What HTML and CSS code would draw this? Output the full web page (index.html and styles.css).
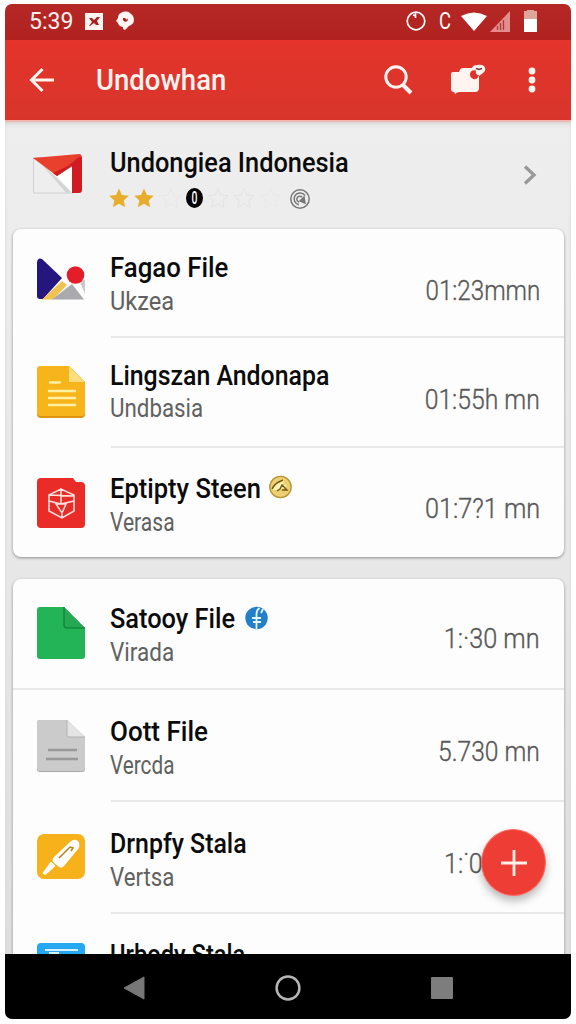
FILE: index.html
```html
<!DOCTYPE html>
<html lang="id">
<head>
<meta charset="utf-8">
<title>Undowhan</title>
<link rel="stylesheet" href="styles.css">
</head>
<body>
<div class="phone">
  <div class="status">
    <span class="clock">5:39</span>
    <svg class="st-img" width="18" height="17" viewBox="0 0 18 17"><rect width="18" height="17" fill="#fff4f2"/><path d="M4 5h3l2 2 3-3h3l-3 4 2 4h-3l-2-2-4 3H4l3-4z" fill="#a5201f"/></svg>
    <svg class="st-chat" width="18" height="20" viewBox="0 0 18 20"><path d="M9 .5C13 0 14 2 15 3c2 1 3 4 3 6 0 3-2 5-5 6l-4 4-2-1v-2C4 16 2 13 2 12L0 10l2-3C2 3 5 1 9 .5z" fill="#fff4f2"/><path d="M7 7c-1 5 6 5 5 0l-1 2-2-2z" fill="#a5201f"/></svg>
    <span class="grow"></span>
    <svg class="alarm" width="20" height="20" viewBox="0 0 20 20" fill="none" stroke="#fff" stroke-width="1.700"><circle cx="10" cy="10" r="8.800"/><path d="M9.500 2v5M7 4l3 1"/></svg>
    <span class="cee">C</span>
    <svg class="wifi" width="26" height="19" viewBox="0 0 26 19"><path d="M0 4Q13-3 26 4L13 19z" fill="#fff"/></svg>
    <svg class="signal" width="20" height="21" viewBox="0 0 20 21"><path d="M20 0v21H0z" fill="#e58d8c"/><path d="M7.500 15v4M10.500 12v7M13.500 9v10" stroke="#a63a38" stroke-width="1.300"/></svg>
    <svg class="battery" width="13" height="22" viewBox="0 0 13 22"><path d="M0 1h3V0h7v1h3v9H0z" fill="#dca69b"/><path d="M0 9h13v13H0z" fill="#fff"/></svg>
  </div>
  <div class="appbar">
    <svg class="back" width="26" height="26" viewBox="0 0 26 26" fill="none" stroke="#fff4f0" stroke-width="3"><path d="M25 13H3M13.500 2L2.500 13l11 11"/></svg>
    <h1 class="heading">Undowhan</h1>
    <svg class="search" width="29" height="30" viewBox="0 0 29 30" fill="none" stroke="#fff4f0"><circle cx="12" cy="12" r="10.200" stroke-width="3"/><path d="M19 20l8 8" stroke-width="4"/></svg>
    <svg class="camera" width="36" height="31" viewBox="0 0 36 31"><path d="M2.500 8H9q1-4 4-4h9q1-3 5-3 4-1 7 1 3 4-1 7l-4 3v12q0 4-4 4H10q-3 0-5 2l-1-2q-3 0-3-3V11q0-3 1.500-3z" fill="#fff4f0"/><path d="M29 11.500l-2 3q-3 2-6-1-2-3 0-6 2-2 5-1-1 4 3 5z" fill="#df332b"/><path d="M26 4.500l3 1 3-1" stroke="#6e3730" stroke-width="1.500" fill="none"/></svg>
    <svg class="more" width="8" height="26" viewBox="0 0 8 26" fill="#fff4f0"><circle cx="4" cy="4" r="3.400"/><circle cx="4" cy="13" r="3.400"/><circle cx="4" cy="22" r="3.400"/></svg>
  </div>
  <div class="body">
    <div class="summary">
      <svg class="mail" width="50" height="40" viewBox="0 0 50 40"><path d="M.5 3.500h40V39H.5z" fill="#eee" stroke="#d0d0d0"/><path d="M12 13l27 25.500h-6L9 11z" fill="#d4d4d3"/><path d="M24 22l15-9v26z" fill="#fff"/><path d="M0 4L46 0q3 0 3 4L39 12l-15 10z" fill="#e8402d"/><path d="M49 3v33q0 3-3 3h-7V12L24 22l-4-3 15-7 11-9z" fill="#cf1c22"/></svg>
      <div class="summary-text">
        <div class="title t-main">Undongiea Indonesia</div>
        <div class="rating">
          <svg width="180" height="22" viewBox="0 0 180 22"><defs><path id="s" d="M10 .5l2.900 6.600 6.900.7-5.100 4.600 1.400 6.900-6.100-3.500-6.100 3.500 1.400-6.900L.2 7.800l6.900-.7z"/></defs><g fill="#e8ad2c"><use href="#s"/><use href="#s" x="25"/></g><g fill="none" stroke="#e2e2e2"><use href="#s" x="52" opacity=".4"/><use href="#s" x="99"/><use href="#s" x="125"/><use href="#s" x="152" opacity=".3"/></g></svg>
          <span class="zero"><span class="zero-digit">0</span></span>
          <svg class="seal" width="20" height="20" viewBox="0 0 20 20" fill="none" stroke="#777" stroke-width="1.500"><circle cx="10" cy="10" r="9.200"/><path d="M15 6.500a6 6 0 1 0-6 9.300M12 8a3 3 0 1 0-3 5"/><path d="M14 8l1 6-5-2z" fill="#777"/></svg>
        </div>
      </div>
      <svg class="chevron" width="14" height="20" viewBox="0 0 14 20" fill="none" stroke="#999" stroke-width="3.300"><path d="M2 1.500L11 10l-9 8.500"/></svg>
    </div>

    <div class="card">
      <div class="row r1">
        <svg class="icon" width="50" height="52" viewBox="0 0 50 52"><path d="M42 24h6v14z" fill="#c9c9d0"/><path d="M0 6q1-5 5-3l20 19L6 43H3q-3 0-3-3z" fill="#24157f"/><path d="M5 43.500l20-18.500 5 4-14 14.500z" fill="#f0c252"/><path d="M15 43.500l20-15.500 12 15.500z" fill="#aaa9ae"/><circle cx="38.500" cy="19" r="8.800" fill="#e31e28"/></svg>
        <div class="text"><div class="title t1">Fagao File</div><div class="sub s1">Ukzea</div></div><div class="time m1">01:23mmn</div>
      </div>
      <div class="row r2">
        <svg class="icon" width="50" height="54" viewBox="0 0 50 54"><path d="M4 1h28l16 16v32q0 4-4 4H4q-4 0-4-4V5q0-4 4-4z" fill="#dc9411"/><path d="M4 1h28l16 16v30q0 4-4 4H4q-4 0-4-4V5q0-4 4-4z" fill="#f8b51b"/><path d="M32 1l16 16H32z" fill="#fcdd7b"/><path d="M13 17.500h10M12 26h26M12 33h26M12 40h26" stroke="#fff0a2" stroke-width="2.500" stroke-linecap="round"/></svg>
        <div class="text"><div class="title t2">Lingszan Andonapa</div><div class="sub s2">Undbasia</div></div><div class="time m2">01:55h mn</div>
      </div>
      <div class="row r3">
        <svg class="icon" width="50" height="52" viewBox="0 0 50 52"><path d="M4 1h32l3 4h5q4 0 4 4v38q0 4-4 4H4q-4 0-4-4V5q0-4 4-4z" fill="#e92c27"/><path d="M12 18l12-6 13 6v16l-12 7-13-7zM12 24l12 3 13-3M24 11v16M12 18l25 1M19 27h10l-4 9zM25 34v6" fill="none" stroke="#ffe3df" stroke-width="1.500"/></svg>
        <div class="text"><div class="title t3">Eptipty Steen</div><div class="sub s3">Verasa</div></div><div class="time m3">01:7?1 mn</div>
        <svg class="badge b3" width="23" height="24" viewBox="0 0 23 24"><circle cx="11.500" cy="12" r="10.700" fill="#ecd071" stroke="#b69335" stroke-width="1.300"/><path d="M4 15q2-6 8-8l3-3-1 6h4l-3 3-7 2z" fill="#fff3b2"/><path d="M3 14q3-6 9-8l2-1M8 16l3-2 2-4 5 5h-5" fill="none" stroke="#72571b" stroke-width="1.400"/></svg>
      </div>
    </div>

    <div class="card second">
      <div class="row r4">
        <svg class="icon" width="50" height="54" viewBox="0 0 50 54"><path d="M3 1h24l21 21v28q0 3-3 3H3q-3 0-3-3V4q0-3 3-3z" fill="#22b457"/><path d="M27 1l21 21H30q-3 0-3-3z" fill="#25a852"/><path d="M27 1v18q0 3 3 3h18" fill="none" stroke="#15863c" stroke-width="1.500"/></svg>
        <div class="text"><div class="title t4">Satooy File</div><div class="sub s4">Virada</div></div><div class="time m4">1:·30 mn</div>
        <svg class="badge b4" width="23" height="24" viewBox="0 0 23 24"><circle cx="11.500" cy="12" r="11.200" fill="#247fcb"/><path d="M11.500 23V8q0-4 3-6M7 12h9M8 16h8M18 3l-2 4" fill="none" stroke="#e7f5ff" stroke-width="1.800"/></svg>
      </div>
      <div class="row r5">
        <svg class="icon" width="50" height="54" viewBox="0 0 50 54"><path d="M3 1h27l18 17v32q0 3-3 3H3q-3 0-3-3V4q0-3 3-3z" fill="#aaa"/><path d="M3 1h27l18 17v31q0 3-3 3H3q-3 0-3-3V4q0-3 3-3z" fill="#cbcbcb"/><path d="M30 1l18 17H32q-2 0-2-2z" fill="#e4e4e4"/><path d="M30 1v15q0 2 2 2h16" fill="none" stroke="#b2b2b2"/><path d="M11 31h29M9 40h32" stroke="#999" stroke-width="2.300"/></svg>
        <div class="text"><div class="title t5">Oott File</div><div class="sub s5">Vercda</div></div><div class="time m5">5.730 mn</div>
      </div>
      <div class="row r6">
        <svg class="icon" width="50" height="48" viewBox="0 0 50 48"><rect y="1" width="48" height="45" rx="7" fill="#f7b21b"/><path d="M17 24L33 9q4-4 8-1 3 4 0 8L27 33q-3 3-6 0l-4-3q-3-3 0-6z" fill="#fff"/><path d="M14 29l4 4-9 8q-2 1-3-1z" fill="#fff" stroke="#fff"/><path d="M22 25l11-11 3 1-2 3" fill="none" stroke="#bd8013" stroke-width="1.500"/></svg>
        <div class="text"><div class="title t6">Drnpfy Stala</div><div class="sub s6">Vertsa</div></div><div class="time m6">1:˙0</div>
      </div>
      <div class="row r7">
        <svg class="icon" width="50" height="52" viewBox="0 0 50 52"><rect y="1" width="48" height="50" rx="4" fill="#25a7f2"/><path d="M8 8h33M12 11h10" stroke="#d8f0ff" stroke-width="2"/></svg>
        <div class="text"><div class="title t7">Urbody Stala</div></div>
      </div>
    </div>
    <button class="fab" aria-label="Tambah"><svg width="26" height="26" viewBox="0 0 26 26"><path d="M13 0v26M0 13h26" stroke="#fff0e9" stroke-width="2.800"/></svg></button>
  </div>
  <div class="nav">
    <svg width="22" height="24" viewBox="0 0 22 24"><path d="M21 1v22L1 12z" fill="#777" stroke="#777" stroke-linejoin="round"/></svg>
    <svg width="26" height="26" viewBox="0 0 26 26"><circle cx="13" cy="13" r="11.400" fill="none" stroke="#b5b5b5" stroke-width="2.500"/></svg>
    <svg width="22" height="22" viewBox="0 0 22 22"><rect width="22" height="22" rx="1" fill="#7d7d7d"/></svg>
  </div>
</div>
</body>
</html>
```
FILE: styles.css
```css
* { box-sizing: border-box; }
body { margin: 0; background: #fff; font-family: Roboto, "Liberation Sans", sans-serif; }
svg { display: block; flex: none; }
.phone { width: 566px; height: 1015px; margin: 4px 0 0 5px; border-radius: 7px; overflow: hidden; display: flex; flex-direction: column; background: #eaeaea; }
.status { height: 36px; flex: none; background: linear-gradient(#b52826, #b1221f); display: flex; align-items: center; padding: 0 34px 2px 24px; color: #fff; }
.clock { width: 56px; font-size: 24px; line-height: 32px; color: #fff0ee; white-space: nowrap; transform: scaleX(.96); transform-origin: left; }
.st-chat { margin-left: 13px; }
.grow { flex: 1; }
.cee { width: 13px; margin-left: 12px; font-size: 23px; transform: scaleX(.8); transform-origin: left; }
.alarm { margin-right: 1px; }
.wifi { margin-left: 9px; }
.signal { margin-left: 3px; }
.battery { margin-left: 14px; }
.appbar { height: 80px; flex: none; background: linear-gradient(#e4342c, #d8352a); display: flex; align-items: center; padding: 0 35px 1px 24px; }
.heading { width: 289px; margin: 0 0 0 41px; font-size: 30px; line-height: 40px; font-weight: 500; color: #fff2ef; white-space: nowrap; transform: scaleX(.917); transform-origin: left; }
.camera { margin-left: 37px; }
.more { margin-left: 42px; }
.body { height: 834px; flex: none; overflow: hidden; position: relative; padding: 0 7px 0 8px; background: linear-gradient(#eee, #e8e8e8 50%, #dedede); box-shadow: inset 0 2px 1px #f4b5ae, inset 0 5px 4px -1px #d5d5d5; }
.summary { height: 109px; display: flex; padding-left: 20px; }
.mail { margin-top: 34px; }
.summary-text { margin-left: 27px; padding-top: 27px; width: 401px; }
.rating { height: 22px; margin-top: 9px; position: relative; margin-left: -1px; }
.zero { position: absolute; left: 77px; top: 0; width: 17px; height: 20px; border-radius: 50%; background: #000; color: #fff; display: grid; place-items: center; font-size: 19px; line-height: 20px; font-weight: 500; }
.zero-digit { transform: scaleX(.55); }
.seal { position: absolute; left: 181px; top: 1px; }
.chevron { margin-top: 45px; margin-left: 12px; }
.card { background: #fdfdfd; border-radius: 8px; box-shadow: 0 1px 3px #8b8b8b; }
.card.second { margin-top: 22px; height: 420px; }
.row { position: relative; display: flex; padding: 0 24px; }
.row::after { content: ""; position: absolute; left: 98px; right: 0; bottom: 0; height: 2px; background: #e8e8e9; }
.r4::after { left: 0; }
.r3::after, .r7::after { display: none; }
.r1 { height: 109px; padding-top: 23px; }
.r2 { height: 110px; padding-top: 22px; }
.r3 { height: 109px; padding-top: 25px; }
.r4 { height: 111px; padding-top: 24px; }
.r5 { height: 112px; padding-top: 26px; }
.r6 { height: 112px; padding-top: 26px; }
.r7 { height: 85px; padding-top: 25px; }
.icon { margin-top: 3px; }
.r2 .icon { margin-top: 5px; }
.r1 .icon, .r3 .icon { margin-top: 4px; }
.r6 .icon { margin-top: 5px; }
.text { margin-left: 23px; flex: 1; white-space: nowrap; }
.title, .sub { transform-origin: left; white-space: nowrap; }
.title { font-size: 27px; line-height: 32px; font-weight: 500; color: #0b0b0b; }
.sub { font-size: 25px; line-height: 30px; margin-top: 3px; color: #616161; font-weight: 400; }
.r2 .sub { margin-top: 2px; }
.time { font-size: 27px; line-height: 32px; color: #585858; -webkit-text-stroke: .35px #585858; padding-top: 23px; white-space: nowrap; font-weight: 300; transform-origin: right; }
.r2 .time { padding-top: 24px; }
.r3 .time, .r4 .time, .r5 .time, .r6 .time { padding-top: 20px; }
.t-main { transform: scaleX(.939); }
.t1 { transform: scaleX(.955); }
.t2 { transform: scaleX(.921); }
.t3 { transform: scaleX(.945); }
.t4 { transform: scaleX(.94); }
.t5 { transform: scaleX(.963); }
.t6 { transform: scaleX(.922); }
.t7 { transform: scaleX(.878); }
.s1 { transform: scaleX(.945); }
.s2 { transform: scaleX(.893); }
.s3 { transform: scaleX(.842); }
.s4 { transform: scaleX(.9); }
.s5 { transform: scaleX(.83); }
.s6 { transform: scaleX(.89); }
.m1 { transform: scaleX(.895); }
.m2 { transform: scaleX(.915); }
.m3 { transform: scaleX(.935); }
.m4 { transform: scaleX(.935); }
.m5 { transform: scaleX(.91); }
.m6 { width: 96px; transform: scaleX(.93); transform-origin: left; }
.badge { position: absolute; top: 27px; }
.b3 { left: 256px; }
.b4 { left: 232px; }
.fab { position: absolute; left: 476px; top: 709px; width: 65px; height: 67px; border: 1px solid #fb7066; border-radius: 50%; background: #ee3d34; box-shadow: 0 5px 8px #0004; display: grid; place-items: center; padding: 0; }
.nav { flex: 1; background: #000; display: flex; align-items: center; justify-content: space-between; padding: 3px 118px 0 118px; }
```
